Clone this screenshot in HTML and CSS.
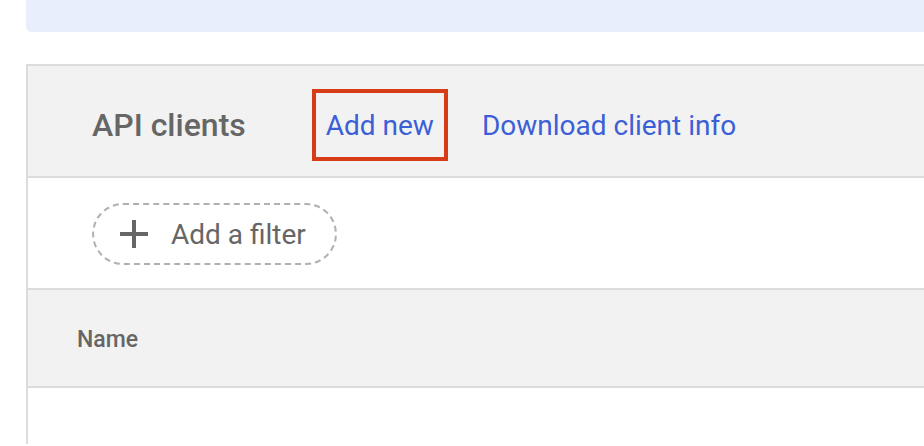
FILE: index.html
```html
<!DOCTYPE html>
<html>
<head>
<meta charset="utf-8">
<link rel="stylesheet" href="styles.css">
</head>
<body>
  <div class="banner"></div>
  <section class="card">
    <header class="card-header">
      <h2 class="title">API clients</h2>
      <a class="link link-boxed" href="#">Add new</a>
      <a class="link" href="#">Download client info</a>
    </header>
    <div class="filter-row">
      <button class="filter-pill">
        <svg class="plus" width="28" height="28" viewBox="0 0 28 28"><path d="M14 0v28M0 14h28" stroke="#666" stroke-width="4" fill="none"/></svg>
        <span>Add a filter</span>
      </button>
    </div>
    <div class="table-head">
      <span class="col-name">Name</span>
    </div>
    <div class="table-body"></div>
  </section>
</body>
</html>
```

FILE: styles.css
```css
* { box-sizing: border-box; }
html, body { margin: 0; padding: 0; background: #fff; }
body {
  font-family: Roboto, "Noto Sans", "Liberation Sans", sans-serif;
  overflow: hidden;
}
.banner {
  margin-left: 26px;
  height: 32px;
  background: #e8eefc;
  border-bottom-left-radius: 6px;
}
.card {
  margin-top: 32px;
  margin-left: 26px;
  border: 2px solid #dcdcdc;
  border-right: none;
  border-bottom: none;
}
.card-header {
  background: #f2f2f2;
  height: 112px;
  display: flex;
  align-items: center;
  padding-left: 64px;
  padding-top: 8px;
  border-bottom: 2px solid #dcdcdc;
}
.title {
  margin: 0;
  font-size: 32px;
  font-weight: 500;
  color: #666;
}
.link {
  font-size: 28px;
  color: #3b5fd7;
  text-decoration: none;
}
.link-boxed {
  margin-left: 66px;
  border: 4px solid #d63d17;
  height: 72px;
  display: flex;
  align-items: center;
  padding: 0 10px;
}
.link-boxed + .link { margin-left: 34px; }
.filter-row {
  height: 112px;
  display: flex;
  align-items: center;
  padding-left: 64px;
  padding-top: 2px;
  border-bottom: 2px solid #dcdcdc;
}
.filter-pill {
  display: flex;
  align-items: center;
  gap: 23px;
  height: 62px;
  width: 245px;
  padding: 0 0 0 26px;
  border: 2px dashed #b0b0b0;
  border-radius: 31px;
  background: #fff;
  font-family: inherit;
  font-size: 28px;
  color: #666;
  cursor: pointer;
}
.plus { flex: none; }
.table-head {
  height: 98px;
  background: #f2f2f2;
  border-bottom: 2px solid #dcdcdc;
  display: flex;
  align-items: center;
  padding-left: 49px;
  padding-top: 2px;
}
.col-name {
  font-size: 23px;
  font-weight: 500;
  color: #666;
}
.table-body { height: 56px; }
```
